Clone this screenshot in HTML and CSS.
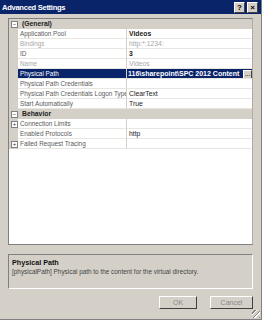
FILE: index.html
```html
<!DOCTYPE html>
<html lang="en">
<head>
  <meta charset="UTF-8" />
  <title>Advanced Settings</title>
  <link rel="stylesheet" href="styles.css">
</head>
<body>
  <div class="window">
    <div class="titlebar">
      <span class="title">Advanced Settings</span>
      <div class="caption-buttons">
        <span class="cap-btn">?</span>
        <span class="cap-btn">&#215;</span>
      </div>
    </div>

    <div class="grid">
      <div class="category"><span class="toggle">&#8722;</span>(General)</div>
      <div class="row"><div class="margin"></div><div class="label">Application Pool</div><div class="value bold">Videos</div></div>
      <div class="row readonly"><div class="margin"></div><div class="label">Bindings</div><div class="value">http:*:1234:</div></div>
      <div class="row"><div class="margin"></div><div class="label">ID</div><div class="value bold">3</div></div>
      <div class="row readonly"><div class="margin"></div><div class="label">Name</div><div class="value">Videos</div></div>
      <div class="row selected"><div class="margin"></div><div class="label">Physical Path</div><div class="value bold"><span class="path">116\sharepoint\SPC 2012 Content</span><span class="ellipsis">...</span></div></div>
      <div class="row"><div class="margin"></div><div class="label">Physical Path Credentials</div><div class="value"></div></div>
      <div class="row"><div class="margin"></div><div class="label">Physical Path Credentials Logon Type</div><div class="value">ClearText</div></div>
      <div class="row"><div class="margin"></div><div class="label">Start Automatically</div><div class="value">True</div></div>
      <div class="category"><span class="toggle">&#8722;</span>Behavior</div>
      <div class="row"><div class="margin"><span class="toggle">+</span></div><div class="label">Connection Limits</div><div class="value"></div></div>
      <div class="row"><div class="margin"></div><div class="label">Enabled Protocols</div><div class="value">http</div></div>
      <div class="row"><div class="margin"><span class="toggle">+</span></div><div class="label">Failed Request Tracing</div><div class="value"></div></div>
    </div>

    <div class="desc">
      <div class="desc-title">Physical Path</div>
      <div class="desc-text">[physicalPath] Physical path to the content for the virtual directory.</div>
    </div>

    <div class="actions">
      <button class="btn">OK</button>
      <button class="btn">Cancel</button>
    </div>
    <div class="grip"></div>
  </div>
</body>
</html>
```

FILE: styles.css
```css
body {
  margin: 0;
  font-family: "Liberation Sans", Arial, sans-serif;
  font-size: 6.8px;
  background: #d4d0c8;
}

.window {
  position: relative;
  width: 262px;
  height: 320px;
  background: #d4d0c8;
  display: flex;
  flex-direction: column;
  box-sizing: border-box;
  border-right: 1px solid #808080;
  border-bottom: 1px solid #808080;
}

.titlebar {
  height: 14px;
  background: #0a246a;
  color: white;
  display: flex;
  align-items: center;
  justify-content: space-between;
  padding: 0 3px 0 2px;
}

.title {
  font-weight: bold;
  font-size: 7.6px;
  letter-spacing: -0.3px;
}

.caption-buttons {
  display: flex;
  gap: 2px;
}

.cap-btn {
  width: 9px;
  height: 9px;
  background: #d4d0c8;
  color: black;
  font-weight: bold;
  font-size: 8px;
  line-height: 9px;
  text-align: center;
  border: 1px solid;
  border-color: white #404040 #404040 white;
}

.grid {
  margin: 4px 8px 0 8px;
  height: 225px;
  background: white;
  border: 1px solid #808080;
  border-right-color: #b0aca4;
}

.category {
  height: 10px;
  line-height: 10px;
  font-weight: bold;
  color: #222;
  background: #d4d0c8;
  display: flex;
  align-items: center;
  gap: 4px;
  padding-left: 2px;
}

.toggle {
  width: 5px;
  height: 5px;
  border: 1px solid #808080;
  background: white;
  color: #333;
  font-size: 6px;
  line-height: 5px;
  text-align: center;
  font-weight: normal;
}

.row {
  display: flex;
  height: 10px;
  line-height: 10px;
}

.margin {
  width: 9px;
  background: #d4d0c8;
  display: flex;
  align-items: center;
  padding-left: 2px;
  box-sizing: border-box;
}

.label {
  width: 109px;
  padding-left: 2px;
  font-size: 6.4px;
  color: #5a5a5a;
  border-right: 1px solid #d4d0c8;
  border-bottom: 1px solid #e8e6e0;
  box-sizing: border-box;
  white-space: nowrap;
  overflow: hidden;
}

.value {
  flex: 1;
  min-width: 0;
  padding-left: 2px;
  color: #222;
  border-bottom: 1px solid #e8e6e0;
  box-sizing: border-box;
  white-space: nowrap;
  overflow: hidden;
  display: flex;
}

.bold {
  font-weight: bold;
}

.readonly .label,
.readonly .value {
  color: #a8a8a8;
}

.selected .label,
.selected .value {
  background: #0a246a;
  color: white;
}

.selected .value {
  padding-left: 1px;
  padding-right: 0;
}

.path {
  flex: 1;
  min-width: 0;
  overflow: hidden;
  font-size: 7px;
}

.ellipsis {
  width: 9px;
  height: 9px;
  margin-top: 1px;
  background: #d4d0c8;
  color: black;
  line-height: 6px;
  text-align: center;
  font-weight: normal;
  border: 1px solid;
  border-color: white #404040 #404040 white;
  box-sizing: border-box;
}

.desc {
  margin: 9px 8px 0 8px;
  height: 35px;
  border: 1px solid #808080;
  border-right-color: white;
  border-bottom-color: white;
  padding: 3px 3px;
  box-sizing: border-box;
}

.desc-title {
  font-weight: bold;
  font-size: 7.2px;
  color: #111;
}

.desc-text {
  font-size: 6.4px;
  color: #444;
  margin-top: 1px;
}

.actions {
  display: flex;
  justify-content: flex-end;
  gap: 13px;
  margin: 7px 8px 0 0;
}

.btn {
  width: 38px;
  height: 13px;
  padding: 0;
  font-family: inherit;
  font-size: 7px;
  color: #888;
  background: #d4d0c8;
  border: 1px solid;
  border-color: white #404040 #404040 white;
}

.btn:last-child {
  width: 43px;
}

.grip {
  position: absolute;
  right: 1px;
  bottom: 1px;
  width: 8px;
  height: 8px;
  background: repeating-linear-gradient(135deg, transparent 0 2px, #808080 2px 3px, white 3px 4px);
}
```
